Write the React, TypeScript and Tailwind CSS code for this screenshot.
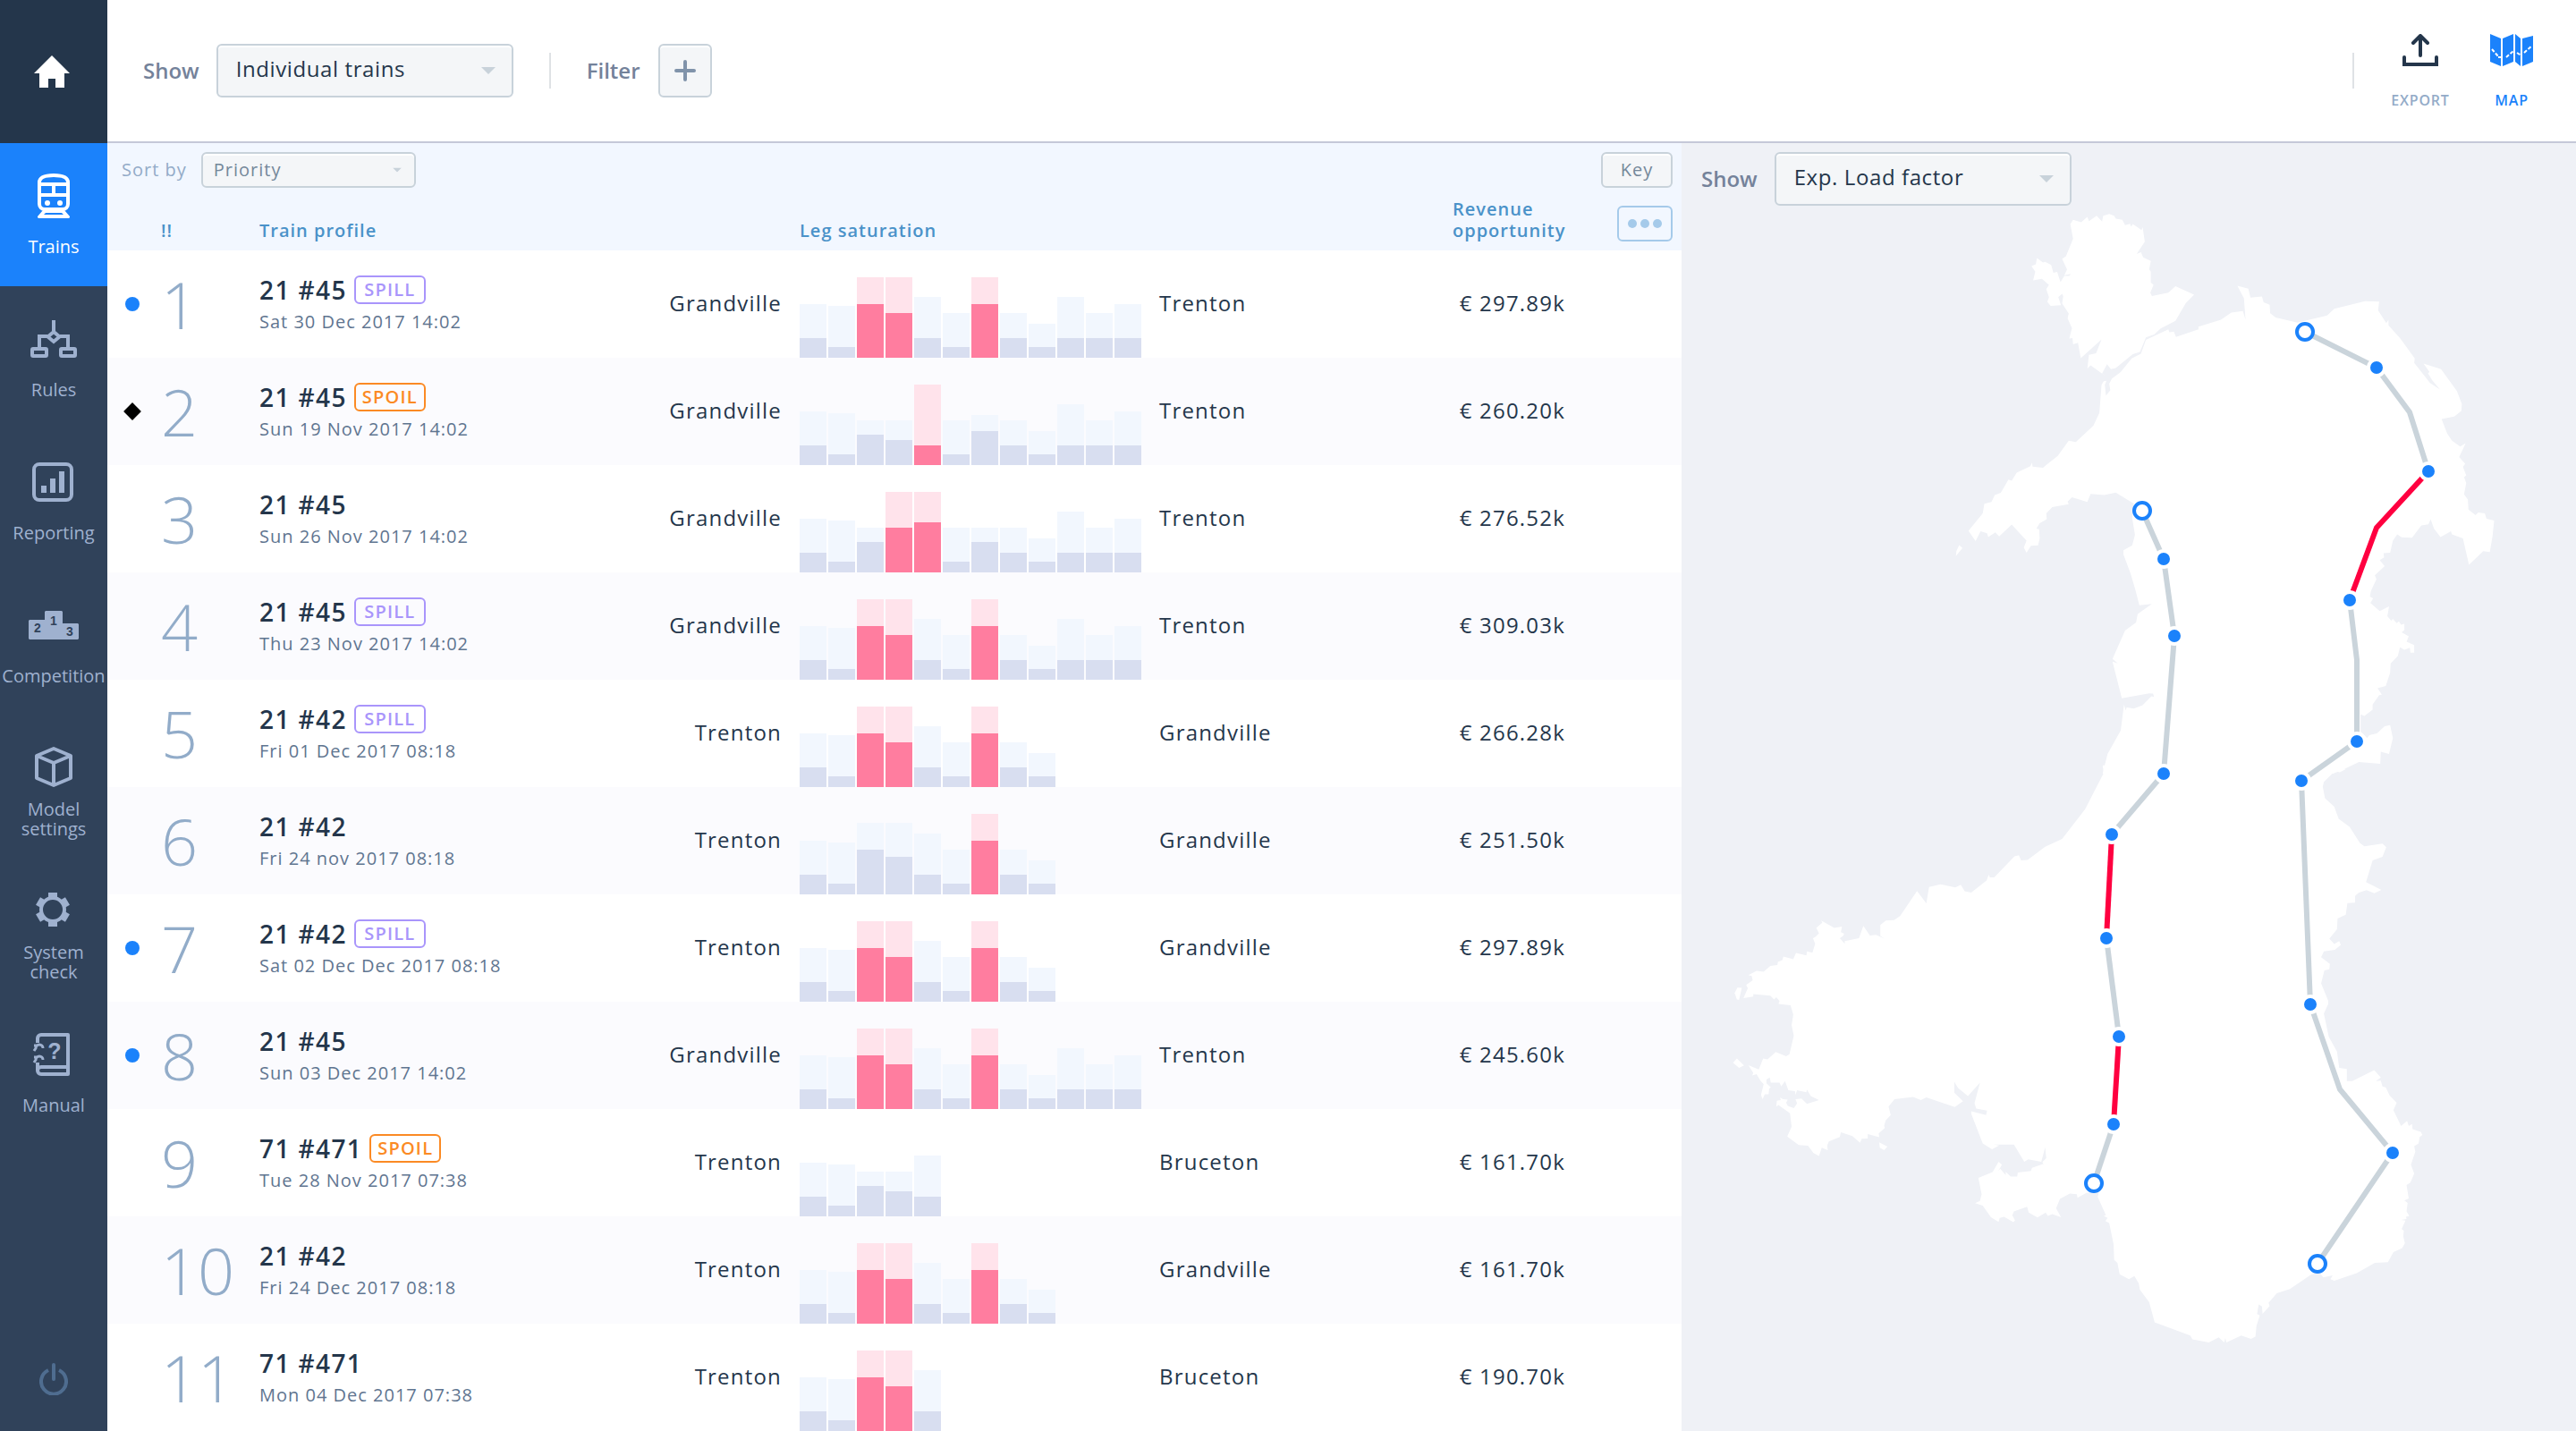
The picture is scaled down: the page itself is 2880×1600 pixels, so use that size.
import { useId, useState } from "react"
import type { ReactNode } from "react"
import clsx from "clsx"

type Leg = {
  total: number
  load: number
  alert?: boolean
}

type Train = {
  rank: number
  name: string
  date: string
  tag?: "SPILL" | "SPOIL"
  marker?: "dot" | "diamond"
  from: string
  to: string
  revenue: string
  legs: Leg[]
}

type Point = [number, number]

const leg = (total: number, load: number, alert = false): Leg => ({ total, load, alert })

const TAIL = [leg(50, 22), leg(38, 12), leg(68, 22), leg(50, 22), leg(60, 22)]

const LONG_RUN = [
  leg(60, 22),
  leg(58, 12),
  leg(90, 60, true),
  leg(90, 50, true),
  leg(68, 22),
  leg(50, 12),
  leg(90, 60, true),
  ...TAIL
]

const SHORT_RUN = LONG_RUN.slice(0, 9)

const TRAINS: Train[] = [
  {
    rank: 1,
    name: "21 #45",
    date: "Sat 30 Dec 2017 14:02",
    tag: "SPILL",
    marker: "dot",
    from: "Grandville",
    to: "Trenton",
    revenue: "€ 297.89k",
    legs: LONG_RUN
  },
  {
    rank: 2,
    name: "21 #45",
    date: "Sun 19 Nov 2017 14:02",
    tag: "SPOIL",
    marker: "diamond",
    from: "Grandville",
    to: "Trenton",
    revenue: "€ 260.20k",
    legs: [
      leg(60, 22),
      leg(58, 12),
      leg(50, 34),
      leg(50, 28),
      leg(90, 22, true),
      leg(50, 12),
      leg(56, 38),
      ...TAIL
    ]
  },
  {
    rank: 3,
    name: "21 #45",
    date: "Sun 26 Nov 2017 14:02",
    from: "Grandville",
    to: "Trenton",
    revenue: "€ 276.52k",
    legs: [
      leg(60, 22),
      leg(58, 12),
      leg(50, 34),
      leg(90, 50, true),
      leg(90, 56, true),
      leg(50, 12),
      leg(50, 34),
      ...TAIL
    ]
  },
  {
    rank: 4,
    name: "21 #45",
    date: "Thu 23 Nov 2017 14:02",
    tag: "SPILL",
    from: "Grandville",
    to: "Trenton",
    revenue: "€ 309.03k",
    legs: LONG_RUN
  },
  {
    rank: 5,
    name: "21 #42",
    date: "Fri 01 Dec 2017 08:18",
    tag: "SPILL",
    from: "Trenton",
    to: "Grandville",
    revenue: "€ 266.28k",
    legs: SHORT_RUN
  },
  {
    rank: 6,
    name: "21 #42",
    date: "Fri 24 nov 2017 08:18",
    from: "Trenton",
    to: "Grandville",
    revenue: "€ 251.50k",
    legs: [
      leg(60, 22),
      leg(58, 12),
      leg(80, 50),
      leg(80, 42),
      leg(68, 22),
      leg(50, 12),
      leg(90, 60, true),
      leg(50, 22),
      leg(38, 12)
    ]
  },
  {
    rank: 7,
    name: "21 #42",
    date: "Sat 02 Dec Dec 2017 08:18",
    tag: "SPILL",
    marker: "dot",
    from: "Trenton",
    to: "Grandville",
    revenue: "€ 297.89k",
    legs: SHORT_RUN
  },
  {
    rank: 8,
    name: "21 #45",
    date: "Sun 03 Dec 2017 14:02",
    marker: "dot",
    from: "Grandville",
    to: "Trenton",
    revenue: "€ 245.60k",
    legs: LONG_RUN
  },
  {
    rank: 9,
    name: "71 #471",
    date: "Tue 28 Nov 2017 07:38",
    tag: "SPOIL",
    from: "Trenton",
    to: "Bruceton",
    revenue: "€ 161.70k",
    legs: [leg(60, 22), leg(58, 12), leg(50, 34), leg(50, 28), leg(68, 22)]
  },
  {
    rank: 10,
    name: "21 #42",
    date: "Fri 24 Dec 2017 08:18",
    from: "Trenton",
    to: "Grandville",
    revenue: "€ 161.70k",
    legs: SHORT_RUN
  },
  {
    rank: 11,
    name: "71 #471",
    date: "Mon 04 Dec 2017 07:38",
    from: "Trenton",
    to: "Bruceton",
    revenue: "€ 190.70k",
    legs: LONG_RUN.slice(0, 5)
  }
]

// coast outlines, digitised in two sheets with their own scales
const NORTH_SHEET = [
  "710,75 715,63 730,70 741,55 744,67 758,52 768,68 770,52 781,47 790,52 793,60 805,63 810,78 819,74 821,82 824,75 840,91 842,83 846,123 831,157 839,152 843,166 857,176 854,199 857,205 857,235 862,241 856,263 859,272 889,263 902,245 936,268 921,291 902,340 875,361 863,377 848,385 837,425 824,431 793,469 784,472 777,459 768,484 776,493 747,462 741,471 744,433 757,429 767,391 729,442 724,400 715,404 714,387 708,388 713,360 705,333 707,320 695,292 697,272 695,266 688,275 693,297 674,299 668,288 671,275 666,253 671,241 658,225 642,229 646,205 639,190 647,185 649,168 660,180 664,178 675,187 679,208 686,206 692,234 699,217 708,217 711,211 699,215 704,199 695,170 702,163 715,115",
  "786,498 802,480 822,443 839,430 848,392 889,363 891,371 899,369 903,384 944,363 944,356 985,337 1004,317 1025,313 1030,337 1027,278 1015,244 1035,252 1039,276 1060,273 1063,289 1074,296 1075,319 1085,331 1125,345 1138,340 1179,325 1192,307 1248,286 1274,287 1272,311 1287,346 1291,337 1291,352 1312,387 1339,443 1338,455 1367,510 1385,528 1371,503 1363,483 1366,480 1355,457 1387,472 1416,532 1425,568 1424,587 1411,602 1388,609 1398,648 1407,668 1422,684 1432,675 1420,713 1431,731 1427,740 1433,763 1429,768 1433,784 1429,815 1436,829 1437,857 1450,872 1455,865 1467,867 1470,882 1484,887 1481,930 1476,973 1464,971 1438,1008 1427,936 1407,925 1405,916 1386,932 1374,909 1368,883 1364,897 1351,900 1334,934 1315,933 1307,925 1299,942 1294,975 1282,976 1283,988 1275,995 1284,1012 1266,1037 1269,1047 1259,1080 1257,1095 1263,1100 1258,1113 1275,1135 1292,1122 1289,1149 1296,1161 1299,1156 1306,1168 1310,1163 1314,1172 1320,1170 1320,1187 1315,1193 1328,1204 1324,1219 1338,1228 1338,1249 1331,1249 1330,1235 1320,1241 1312,1234 1308,1258 1295,1278 1294,1304 1286,1340 1271,1346 1279,1364 1274,1365 1262,1391 1262,1405 1247,1422 1240,1418 1240,1465 1252,1483 1256,1475 1270,1470 1284,1450 1294,1447 1299,1483 1292,1526 1277,1520 1276,1553 1237,1548 1210,1568 1190,1580 769,1580 771,1568 778,1526 802,1462 808,1391 811,1407 813,1399 826,1402 842,1393 858,1368 863,1370 861,1361 854,1360 804,1374 787,1273 797,1278 787,1266 810,1188 830,1166 833,1143 859,1115 836,1119 829,1078 820,1032 807,980 807,968 823,955 828,926 823,880 826,840 821,836 793,810 772,817 747,814 741,836 713,823 705,835 707,842 677,850 666,867 667,883 654,894 648,909 653,911 654,936 651,955 638,956 630,975 625,961 630,942 603,898 580,930 573,919 560,932 558,922 546,916 537,943 524,915 550,867 553,841 566,836 572,817 583,811 597,775 603,778 612,756 637,738 640,728 641,739 660,742 687,710 707,668 720,672 752,627 763,592 767,515 771,505 776,504 773,515 775,545 783,530 781,512",
  "507,954 513,962 501,984 502,970"
]

const SOUTH_SHEET = [
  "769,-10 771,10 737,103 695,180 664,200 632,234 620,235 616,222 608,225 571,279 563,279 561,272 557,287 529,318 517,315 510,298 500,305 473,297 452,304 447,346 430,314 399,379 388,389 373,390 363,402 363,430 371,437 355,427 344,429 332,404 324,436 298,443 298,450 289,436 295,430 297,424 291,420 293,406 279,409 255,390 257,396 246,409 251,423 245,432 240,436 244,450 239,473 229,470 228,480 209,474 204,490 186,483 184,492 176,497 175,505 162,507 150,522 137,520 122,531 128,533 130,544 118,556 121,565 113,590 131,586 131,580 162,584 169,594 173,588 179,598 177,605 199,609 204,633 201,660 205,687 197,735 191,740 172,729 157,748 149,746 141,774 122,763 131,783 129,790 137,786 144,803 150,812 145,840 148,851 152,838 159,838 160,824 163,820 155,810 155,800 161,795 163,808 179,808 182,818 189,804 195,828 207,830 208,840 211,828 228,833 229,826 236,843 251,853 229,863 219,849 208,851 211,862 205,874 194,868 191,860 194,852 185,851 180,846 181,853 174,855 173,870 177,866 198,887 201,922 193,947 214,969 231,971 241,990 251,997 256,976 267,982 266,970 269,960 289,948 291,936 312,946 326,963 329,953 340,952 340,941 361,949 360,939 371,925 370,919 373,905 382,892 378,870 389,851 423,845 437,853 447,846 499,871 514,856 498,834 498,806 505,822 523,843 545,808 535,861 538,875 558,880 556,892 529,882 529,888 550,965 567,980 580,970 570,968 607,968 626,1012 633,1006 657,1012 664,975 666,1003 659,1013 662,1022 660,1018 640,1028 638,1036 614,1040 613,1050 601,1050 592,1038 592,1047 582,1030 578,1037 585,1020 579,1012 568,1039 542,1054 548,1096 545,1113 536,1119 550,1125 565,1155 579,1167 581,1157 589,1154 606,1168 609,1163 604,1150 607,1140 631,1128 634,1143 650,1156 665,1143 669,1152 677,1147 693,1155 684,1132 691,1108 709,1094 722,1096 723,1105 740,1092 762,1092 760,1103 775,1150 771,1152 778,1157 774,1165 781,1170 789,1225 790,1265 796,1273 800,1302 817,1315 827,1307 835,1326 837,1342 854,1374 864,1426 929,1460 933,1470 963,1478 981,1465 991,1478 993,1466 995,1478 1022,1460 1040,1469 1048,1463 1050,1435 1056,1408 1051,1405 1054,1380 1060,1385 1061,1404 1074,1384 1072,1376 1087,1351 1111,1340 1150,1303 1165,1298 1172,1310 1189,1305 1185,1315 1192,1319 1233,1299 1266,1273 1290,1271 1300,1245 1316,1235 1321,1222 1318,1205 1319,1190 1315,1186 1322,1164 1314,1162 1324,1160 1323,1154 1329,1152 1324,1140 1326,1118 1320,1112 1328,1107 1324,1072 1331,1066 1338,1043 1332,1020 1340,986 1338,972 1346,965 1348,948 1353,943 1350,935 1335,928 1334,915 1328,920 1325,907 1314,920 1300,879 1306,860 1293,841 1286,820 1280,818 1277,803 1268,804 1277,795 1265,776 1225,804 1215,804 1215,773 1201,770 1197,728 1182,690 1173,630 1181,605 1181,597 1168,552 1174,519 1183,516 1184,502 1168,485 1173,470 1193,466 1204,453 1201,443 1192,451 1183,437 1197,413 1198,385 1213,375 1216,345 1230,344 1230,327 1237,318 1251,312 1265,320 1278,311 1250,291 1262,235 1280,226 1287,201 1280,192 1247,199 1239,191 1220,149 1200,128 1192,97 1175,75 1171,45 1173,33 1193,5 1202,8 1213,0 1190,-10",
  "102,563 110,564 105,595 101,594 97,577",
  "101,746 114,764 105,770 94,757",
  "361,962 376,973 370,982 362,976"
]

const TRACKS: { points: Point[]; alert?: boolean }[] = [
  { points: [[697, 211], [777, 251], [814, 301], [835, 367]] },
  { points: [[835, 367], [777, 430], [747, 511]], alert: true },
  { points: [[747, 511], [755, 578], [755, 669], [693, 713], [703, 963], [736, 1058], [795, 1129], [711, 1253]] },
  { points: [[515, 411], [539, 465], [551, 551], [539, 705], [481, 773]] },
  { points: [[481, 773], [475, 889]], alert: true },
  { points: [[475, 889], [489, 999]] },
  { points: [[489, 999], [483, 1097]], alert: true },
  { points: [[483, 1097], [461, 1163]] }
]

const STATIONS: Point[] = [
  [777, 251],
  [835, 367],
  [747, 511],
  [755, 669],
  [693, 713],
  [703, 963],
  [795, 1129],
  [539, 465],
  [551, 551],
  [539, 705],
  [481, 773],
  [475, 889],
  [489, 999],
  [483, 1097]
]

const TERMINALS: Point[] = [
  [697, 211],
  [711, 1253],
  [515, 411],
  [461, 1163]
]

function HomeIcon() {
  return (
    <svg width="40" height="36" viewBox="0 0 40 36" fill="currentColor" aria-hidden="true">
      <path d="M20 0 40 20H34V36H24V26H16V36H6V20H0Z" />
    </svg>
  )
}

function TrainIcon() {
  return (
    <svg width="36" height="50" viewBox="0 0 36 50" fill="none" stroke="currentColor" strokeWidth="4" aria-hidden="true">
      <path d="M2 10C2 4 10 2 18 2S34 4 34 10V34A6 6 0 0 1 28 40H8A6 6 0 0 1 2 34Z" />
      <path d="M2 12H34M2 24H34M18 12V24" />
      <g fill="currentColor" stroke="none">
        <circle cx="11" cy="33" r="3" />
        <circle cx="25" cy="33" r="3" />
        <path fillRule="evenodd" d="M6 41H30L36 48V49L35 50H1L0 49V48ZM9 44 7 46H29L27 44Z" />
      </g>
    </svg>
  )
}

function RulesIcon() {
  return (
    <svg width="52" height="42" viewBox="0 0 52 42" fill="none" stroke="currentColor" strokeWidth="4" aria-hidden="true">
      <path d="M26 0V12M26 13 32.500 18.500 26 24 19.500 18.500ZM10 31V18H19M42 31V18H33" />
      <rect x="2" y="32" width="16" height="8" rx="1" />
      <rect x="34" y="32" width="16" height="8" rx="1" />
    </svg>
  )
}

function ReportingIcon() {
  return (
    <svg width="48" height="44" viewBox="0 0 48 44" aria-hidden="true">
      <rect x="2" y="2" width="42" height="40" rx="6" fill="none" stroke="currentColor" strokeWidth="4" />
      <path fill="currentColor" d="M10 26h6v8h-6zM20 18h6v16h-6zM30 10h6v24h-6z" />
    </svg>
  )
}

function CompetitionIcon() {
  return (
    <svg width="56" height="32" viewBox="0 0 56 32" fill="currentColor" aria-hidden="true">
      <path d="M1 10H18V1L19 0H37L38 1V14H55L56 15V31L55 32H1L0 31V11Z" />
      <g className="fill-[#30425a] font-['Liberation_Sans'] text-[14px] font-bold" textAnchor="middle">
        <text x="10" y="24">2</text>
        <text x="28" y="16">1</text>
        <text x="46" y="28">3</text>
      </g>
    </svg>
  )
}

function ModelIcon() {
  return (
    <svg width="42" height="46" viewBox="0 0 42 46" fill="none" stroke="currentColor" strokeWidth="4" strokeLinejoin="round" aria-hidden="true">
      <path d="M21 3 40 11V36L21 44 2 36V11ZM2 11 21 19 40 11M21 19V44" />
    </svg>
  )
}

function SystemIcon() {
  return (
    <svg width="40" height="38" viewBox="0 0 40 38" fill="currentColor" aria-hidden="true">
      <circle cx="19" cy="19" r="13" fill="none" stroke="currentColor" strokeWidth="4" />
      {[0, 60, 120, 180, 240, 300].map((angle) => (
        <rect key={angle} x="14" y="0" width="10" height="7" transform={`rotate(${angle} 19 19)`} />
      ))}
    </svg>
  )
}

function ManualIcon() {
  return (
    <svg width="48" height="48" viewBox="0 0 48 48" fill="none" stroke="currentColor" strokeWidth="4" strokeLinejoin="round" aria-hidden="true">
      <path d="M6 11V6A4 4 0 0 1 10 2H40V46H10A4 4 0 0 1 6 42V33M6 42A4 4 0 0 1 10 38H40" />
      <path d="M12 17A4 4 0 1 0 4 17L2 20M12 30A4 4 0 1 0 4 30L2 33M2 14H5M2 27H5" strokeWidth="3" />
      <text x="25" y="29" textAnchor="middle" stroke="none" fill="currentColor" className="font-['Liberation_Sans'] text-[25px] font-bold">
        ?
      </text>
    </svg>
  )
}

function PowerIcon() {
  return (
    <svg width="32" height="36" viewBox="0 0 32 36" fill="none" stroke="currentColor" strokeWidth="4" aria-hidden="true">
      <path d="M10 8A14 14 0 1 0 22 8" />
      <path d="M16 2V18" strokeLinecap="round" />
    </svg>
  )
}

function ExportIcon() {
  return (
    <svg width="40" height="36" viewBox="0 0 40 36" fill="none" stroke="currentColor" strokeWidth="4" strokeLinecap="round" aria-hidden="true">
      <path d="M20 3V24M12 10 20 2 28 10" strokeLinejoin="round" />
      <path d="M2 26V34H38V26" />
    </svg>
  )
}

function MapIcon() {
  return (
    <svg width="48" height="36" viewBox="0 0 48 36" aria-hidden="true">
      <path fill="currentColor" d="M0 0 12 5V36L0 31ZM14 5 26 0V31L14 36ZM28 0 34 5V36L28 31ZM36 5 48 2V31L36 36Z" />
      <g fill="none" stroke="white" strokeWidth="2">
        <path d="M2 17 9 25M9 26H12M18 26 26 19" strokeDasharray="4 2" />
        <path d="M30 21 34 23.500M38 21 47 13" strokeDasharray="4 2" />
      </g>
    </svg>
  )
}

const NAV_ITEMS: { label: string; icon: ReactNode }[] = [
  { label: "Trains", icon: <TrainIcon /> },
  { label: "Rules", icon: <RulesIcon /> },
  { label: "Reporting", icon: <ReportingIcon /> },
  { label: "Competition", icon: <CompetitionIcon /> },
  { label: "Model settings", icon: <ModelIcon /> },
  { label: "System check", icon: <SystemIcon /> },
  { label: "Manual", icon: <ManualIcon /> }
]

function Sidebar() {
  return (
    <nav className="flex w-[120px] shrink-0 flex-col bg-[#30425a] text-[#9fb1cf]">
      <a href="#home" aria-label="Home" className="flex h-40 items-center justify-center bg-[#24364b] pr-1 text-white">
        <HomeIcon />
      </a>
      {NAV_ITEMS.map((item, index) => {
        const wraps = item.label.includes(" ")
        return (
          <a
            key={item.label}
            href={`#${item.label.toLowerCase().replace(" ", "-")}`}
            className={clsx("flex h-40 flex-col items-center pt-[34px]", index === 0 && "bg-[#1b82fb] text-white")}
          >
            <span className={clsx("flex items-center", wraps ? "h-[46px]" : "h-[50px]")}>{item.icon}</span>
            <span
              className={clsx(
                "flex h-11 items-center text-center text-[20px] leading-[22px] font-medium",
                wraps ? "mt-[14px] w-24" : "mt-[10px]"
              )}
            >
              <span className="w-full">{item.label}</span>
            </span>
          </a>
        )
      })}
      <button type="button" aria-label="Log out" className="mt-auto flex justify-center pb-10 text-[#4f6d90]">
        <PowerIcon />
      </button>
    </nav>
  )
}

type DropdownProps = {
  label: string
  options: string[]
  compact?: boolean
}

function Dropdown({ label, options, compact = false }: DropdownProps) {
  const id = useId()
  const [value, setValue] = useState(options[0])

  return (
    <div className={clsx("flex items-center", compact ? "gap-4" : "gap-[19px]")}>
      <label
        htmlFor={id}
        className={clsx(
          compact ? "text-[20px] font-medium tracking-wider text-[#93abc8]" : "text-[24px] font-semibold text-[#74829a]"
        )}
      >
        {label}
      </label>
      <div className="relative">
        <select
          id={id}
          value={value}
          onChange={(event) => setValue(event.target.value)}
          className={clsx(
            "appearance-none rounded-md border-2 border-[#c8d2da] bg-[#f4f6f8] shadow-[inset_0_2px_0_white] outline-none",
            compact
              ? "h-10 w-60 px-3 text-[20px] font-medium tracking-wider text-[#74889a]"
              : "h-[60px] w-[332px] px-5 pb-1 text-[24px] tracking-wide text-[#24364b]"
          )}
        >
          {options.map((option) => (
            <option key={option}>{option}</option>
          ))}
        </select>
        <svg
          viewBox="0 0 16 8"
          className={clsx(
            "pointer-events-none absolute top-1/2 -translate-y-1/2 fill-[#c8d2da]",
            compact ? "right-4 h-[5px] w-[10px]" : "right-5 h-2 w-4"
          )}
          aria-hidden="true"
        >
          <path d="M0 0H16L8 8Z" />
        </svg>
      </div>
    </div>
  )
}

function Toolbar() {
  return (
    <header className="flex h-40 shrink-0 items-center border-b-2 border-[#c5c8d8] bg-white pr-8 pl-10">
      <Dropdown label="Show" options={["Individual trains", "Train groups"]} />
      <div className="mx-10 h-10 w-0.5 bg-[#dfe2e5]" />
      <div className="flex items-center gap-5">
        <span className="text-[24px] font-semibold text-[#74829a]">Filter</span>
        <button
          type="button"
          aria-label="Add filter"
          className="flex size-[60px] items-center justify-center rounded-md border-2 border-[#c8d2da] bg-[#f4f6f8] text-[#8093aa] shadow-[inset_0_2px_0_white]"
        >
          <svg width="24" height="24" viewBox="0 0 24 24" stroke="currentColor" strokeWidth="4" strokeLinecap="round" aria-hidden="true">
            <path d="M2 12H22M12 2V22" />
          </svg>
        </button>
      </div>
      <div className="mr-[34px] ml-auto h-10 w-0.5 bg-[#dfe2e5]" />
      <div className="flex gap-[22px] pt-1 text-[16px] leading-6 font-semibold tracking-wider">
        <button type="button" className="flex w-20 flex-col items-center gap-[26px] text-[#93abc8]">
          <span className="text-[#24364b]">
            <ExportIcon />
          </span>
          EXPORT
        </button>
        <button type="button" className="flex w-20 flex-col items-center gap-[26px] text-[#1b82fb]">
          <MapIcon />
          MAP
        </button>
      </div>
    </header>
  )
}

function LegChart({ legs }: { legs: Leg[] }) {
  return (
    <div className="flex h-[120px] items-end gap-0.5">
      {legs.map((item, index) => (
        <div
          key={index}
          className={clsx("flex w-[30px] items-end", item.alert ? "bg-[#ffe3eb]" : "bg-[#f2f7fe]")}
          style={{ height: item.total }}
        >
          <div className={clsx("w-full", item.alert ? "bg-[#ff7d9f]" : "bg-[#d8def0]")} style={{ height: item.load }} />
        </div>
      ))}
    </div>
  )
}

function TrainRow({ train }: { train: Train }) {
  return (
    <tr className="h-[120px] odd:bg-white even:bg-[#fbfbfe]">
      <td>
        <div className="flex items-center">
          <span className="flex w-[60px] justify-center pr-1">
            {train.marker === "dot" ? <span className="size-4 rounded-full bg-[#1b82fb]" /> : null}
            {train.marker === "diamond" ? <span className="size-[14px] rotate-45 bg-black" /> : null}
          </span>
          <span className="text-[72px] leading-[72px] font-light tracking-normal text-[#92acc9]">{train.rank}</span>
        </div>
      </td>
      <td className="pt-1">
        <div className="flex items-center gap-2">
          <span className="text-[28px] leading-9 font-semibold tracking-wider">{train.name}</span>
          {train.tag ? (
            <span
              className={clsx(
                "flex h-8 w-20 items-center justify-center rounded-md border-2 text-[20px] font-semibold",
                train.tag === "SPILL" ? "border-[#a995fb] text-[#a995fb]" : "border-[#fb8a24] text-[#fb8a24]"
              )}
            >
              {train.tag}
            </span>
          ) : null}
        </div>
        <div className="text-[20px] leading-9 tracking-wider text-[#5f7590]">{train.date}</div>
      </td>
      <td className="pr-5 pb-0.5 text-right">{train.from}</td>
      <td>
        <LegChart legs={train.legs} />
      </td>
      <td className="pb-0.5">{train.to}</td>
      <td className="pr-[130px] pb-0.5 text-right">{train.revenue}</td>
    </tr>
  )
}

function TrainList() {
  return (
    <section className="min-w-0 bg-white">
      <div className="flex h-[60px] items-center justify-between bg-[#f2f7ff] pr-[10px] pl-4">
        <Dropdown label="Sort by" options={["Priority", "Revenue", "Date"]} compact />
        <button
          type="button"
          className="h-10 w-20 rounded-md border-2 border-[#c8d2da] bg-[#f4f6f8] text-[20px] leading-8 font-medium tracking-wider text-[#74889a] shadow-[inset_0_2px_0_white]"
        >
          Key
        </button>
      </div>
      <table className="w-full table-fixed text-left text-[24px] leading-8 tracking-wider text-[#24364b]">
        <colgroup>
          <col className="w-[170px]" />
          <col className="w-[400px]" />
          <col className="w-[204px]" />
          <col className="w-[402px]" />
          <col />
          <col className="w-[256px]" />
        </colgroup>
        <thead className="bg-[#f2f7ff] text-[20px] leading-6 tracking-wider text-[#4a92c9]">
          <tr className="h-[60px] align-bottom">
            <th className="pb-[10px] pl-[60px] font-semibold">!!</th>
            <th className="pb-[10px] font-semibold">Train profile</th>
            <th aria-label="From" />
            <th className="pb-[10px] font-semibold">Leg saturation</th>
            <th aria-label="To" />
            <th className="pr-[10px] pb-[10px] font-semibold">
              <div className="flex items-end justify-between">
                <span className="w-32">Revenue opportunity</span>
                <button
                  type="button"
                  aria-label="More columns"
                  className="flex h-10 w-[62px] items-center justify-center gap-1 rounded-md border-2 border-[#a5caea]"
                >
                  <span className="size-[10px] rounded-full bg-[#a5caea]" />
                  <span className="size-[10px] rounded-full bg-[#a5caea]" />
                  <span className="size-[10px] rounded-full bg-[#a5caea]" />
                </button>
              </div>
            </th>
          </tr>
        </thead>
        <tbody>
          {TRAINS.map((train) => (
            <TrainRow key={train.rank} train={train} />
          ))}
        </tbody>
      </table>
    </section>
  )
}

function NetworkMap() {
  return (
    <svg viewBox="0 0 1000 1440" className="col-start-1 row-start-1 w-full" role="img" aria-label="Rail network">
      <g fill="white">
        <g transform="translate(0 60) scale(0.6122 0.4082)">
          {NORTH_SHEET.map((points) => (
            <polygon key={points} points={points} />
          ))}
        </g>
        <g transform="translate(0 700) scale(0.6122 0.4337)">
          {SOUTH_SHEET.map((points) => (
            <polygon key={points} points={points} />
          ))}
        </g>
      </g>
      {TRACKS.map((track) => (
        <polyline
          key={track.points.join(" ")}
          points={track.points.join(" ")}
          fill="none"
          stroke={track.alert ? "#ff0040" : "#cad4db"}
          strokeWidth="6"
        />
      ))}
      {STATIONS.map(([x, y]) => (
        <circle key={`${x}-${y}`} cx={x} cy={y} r="9" fill="#1b82fb" stroke="white" strokeWidth="4" />
      ))}
      {TERMINALS.map(([x, y]) => (
        <circle key={`${x}-${y}`} cx={x} cy={y} r="9" fill="white" stroke="#1b82fb" strokeWidth="4" />
      ))}
    </svg>
  )
}

function MapPanel() {
  return (
    <section className="grid min-w-0 content-start bg-[#eff1f6]">
      <NetworkMap />
      <div className="z-10 col-start-1 row-start-1 self-start pt-[10px] pl-[22px]">
        <Dropdown label="Show" options={["Exp. Load factor", "Load factor"]} />
      </div>
    </section>
  )
}

function App() {
  return (
    <div className="flex min-h-screen bg-white font-['Open_Sans',sans-serif] text-[#24364b]">
      <Sidebar />
      <div className="flex min-w-0 flex-1 flex-col">
        <Toolbar />
        <main className="grid flex-1 grid-cols-[1.76fr_1fr]">
          <TrainList />
          <MapPanel />
        </main>
      </div>
    </div>
  )
}

export default App
